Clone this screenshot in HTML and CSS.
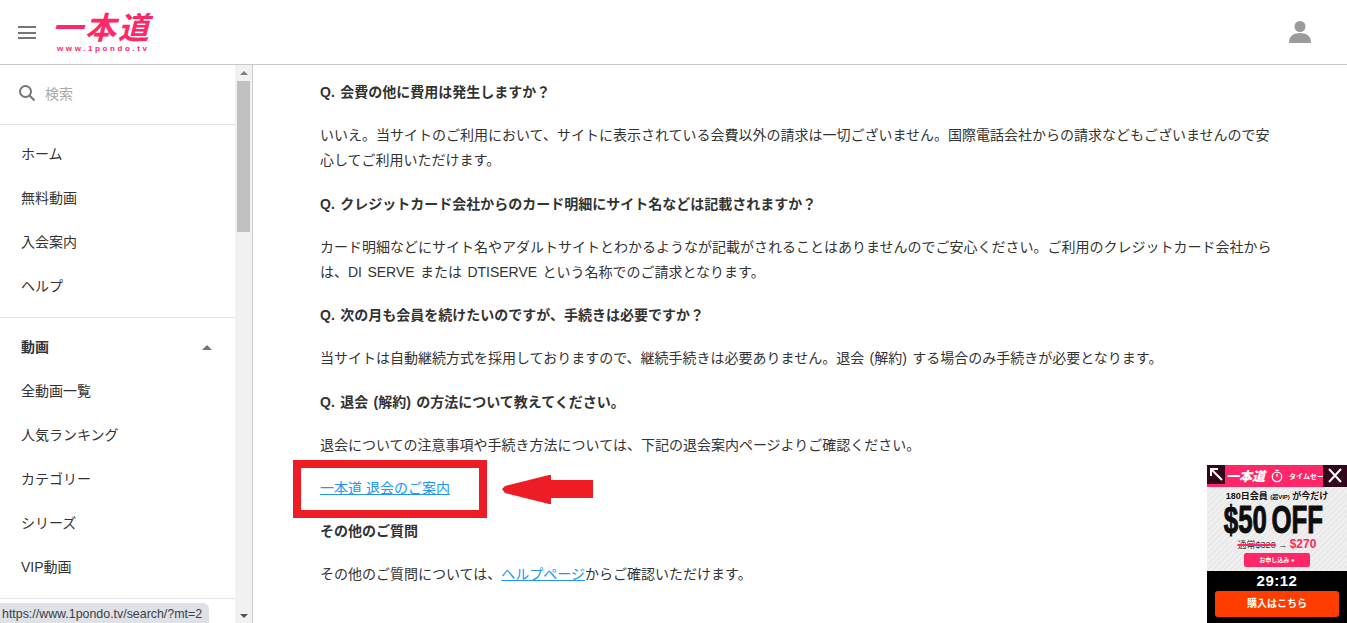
FILE: index.html
```html
<!DOCTYPE html>
<html lang="ja">
<head>
<meta charset="utf-8">
<title>一本道</title>
<link rel="stylesheet" href="styles.css">
</head>
<body>
<header class="topbar">
  <button class="burger" aria-label="menu"><span></span><span></span><span></span></button>
  <div class="logo">
    <div class="logo-mark">一本道</div>
    <div class="logo-url">www.1pondo.tv</div>
  </div>
  <svg class="user" viewBox="0 0 24 24" width="24" height="24"><circle cx="12" cy="6.500" r="5.500"/><path d="M1 23v-1C1 16 6 13 12 13S23 16 23 22V23z"/></svg>
</header>
<div class="body">
  <aside class="side">
    <nav class="side-nav">
      <div class="search">
        <svg viewBox="0 0 18 18" width="18" height="18"><circle cx="7.500" cy="7.500" r="5.500"/><path d="M11.500 11.500L16.500 16.500"/></svg>
        <span>検索</span>
      </div>
      <ul class="menu first">
        <li>ホーム</li><li>無料動画</li><li>入会案内</li><li>ヘルプ</li>
      </ul>
      <ul class="menu">
        <li class="group">動画<i class="caret"></i></li>
        <li>全動画一覧</li><li>人気ランキング</li><li>カテゴリー</li><li>シリーズ</li><li>VIP動画</li>
      </ul>
    </nav>
    <div class="scrollbar">
      <i class="arrow up"></i>
      <div class="thumb"></div>
      <i class="arrow down"></i>
    </div>
  </aside>
  <main class="content">
    <p class="q">Q. 会費の他に費用は発生しますか？</p>
    <p>いいえ。当サイトのご利用において、サイトに表示されている会費以外の請求は一切ございません。国際電話会社からの請求などもございませんので安心してご利用いただけます。</p>
    <p class="q">Q. クレジットカード会社からのカード明細にサイト名などは記載されますか？</p>
    <p>カード明細などにサイト名やアダルトサイトとわかるようなが記載がされることはありませんのでご安心ください。ご利用のクレジットカード会社からは、DI SERVE または DTISERVE という名称でのご請求となります。</p>
    <p class="q">Q. 次の月も会員を続けたいのですが、手続きは必要ですか？</p>
    <p>当サイトは自動継続方式を採用しておりますので、継続手続きは必要ありません。退会 (解約) する場合のみ手続きが必要となります。</p>
    <p class="q">Q. 退会 (解約) の方法について教えてください。</p>
    <p>退会についての注意事項や手続き方法については、下記の退会案内ページよりご確認ください。</p>
    <p class="callout-row">
      <a href="#">一本道 退会のご案内</a>
      <span class="red-box"></span>
      <svg class="red-arrow" viewBox="0 0 91 29" width="91" height="29"><path d="M0 14L3 11L47 0H49V5H91V23H49V29H47L3 18Z"/></svg>
    </p>
    <p class="q">その他のご質問</p>
    <p>その他のご質問については、<a href="#">ヘルプページ</a>からご確認いただけます。</p>
  </main>
</div>
<div class="status">https://www.1pondo.tv/search/?mt=2</div>
<aside class="promo">
  <div class="promo-head">
    <b class="promo-brand">一本道</b>
    <svg viewBox="0 0 14 16" width="12" height="14"><circle cx="7" cy="9" r="5.500"/><path d="M5 1.500H9M7 9V5.500"/></svg>
    <span>タイムセール</span>
  </div>
  <div class="promo-btn expand"><svg viewBox="0 0 18 18" width="18" height="18"><path d="M15 15L4 4M4 11V4H11"/></svg></div>
  <div class="promo-btn close"><svg viewBox="0 0 24 22" width="24" height="22"><path d="M6 4L18 17M18 4L6 17"/></svg></div>
  <div class="promo-card">
    <div class="promo-line">180日会員 <small>(超VIP)</small> が今だけ</div>
    <div class="promo-off">$50 OFF</div>
    <div class="promo-price"><s>通常$320</s> <span>→</span> <b>$270</b></div>
    <div class="promo-apply">お申し込み ●</div>
  </div>
  <div class="promo-foot">
    <div class="timer">29:12</div>
    <div class="buy">購入はこちら</div>
  </div>
</aside>
</body>
</html>
```
FILE: styles.css
```css
* { box-sizing: border-box; }
html, body { margin: 0; height: 623px; overflow: hidden; }
body {
  font-family: "Liberation Sans", "Noto Sans CJK JP", sans-serif;
  font-size: 14px;
  color: #333;
  background: #fff;
}
.topbar {
  height: 65px;
  border-bottom: 1px solid #c8c8c8;
  display: flex;
  align-items: center;
  padding: 0 35px 0 18px;
}
.burger {
  width: 18px; height: 13px; padding: 0; border: 0; background: none;
  display: flex; flex-direction: column; justify-content: space-between;
  margin-right: 19px; margin-top: 1px;
}
.burger span { display: block; height: 2px; background: #757575; }
.logo { display: flex; flex-direction: column; align-items: flex-start; width: 102px; margin-top: -2px; }
.logo-mark {
  font-family: "Noto Sans CJK JP", sans-serif;
  font-weight: 700; font-size: 31px; line-height: 31px;
  color: #ff2767; font-style: italic; letter-spacing: 2px;
  margin-left: -3px; white-space: nowrap;
}
.logo-url {
  font-size: 8px; font-weight: bold; line-height: 9px; color: #ff2767;
  letter-spacing: 2.600px; margin: 3px 0 0 2px; white-space: nowrap;
}
.user { margin-left: auto; fill: #9b9b9b; }
.body { display: flex; height: 558px; }
.side { width: 253px; flex: none; display: flex; border-right: 1px solid #ccc; overflow: hidden; }
.side-nav { width: 235px; flex: none; }
.search {
  height: 60px; border-bottom: 1px solid #e2e2e2;
  display: flex; align-items: center; gap: 9px; padding: 0 0 3px 18px;
  color: #a9a9a9; font-size: 14px;
}
.search svg { fill: none; stroke: #757575; stroke-width: 2; }
.menu { list-style: none; margin: 0; padding: 7px 0 9px; border-bottom: 1px solid #e2e2e2; }
.menu li { height: 44px; line-height: 44px; padding: 0 21px; color: #333; position: relative; white-space: nowrap; }
.menu .group { font-weight: bold; display: flex; align-items: center; justify-content: space-between; padding-right: 23px; }
.caret { width: 0; height: 0; border: 5px solid transparent; border-top: 0; border-bottom: 5px solid #757575; }
.scrollbar { width: 17px; background: #f1f1f1; display: flex; flex-direction: column; align-items: center; }
.arrow { width: 0; height: 0; border: 4px solid transparent; flex: none; }
.arrow.up { border-top: 0; border-bottom: 4px solid #7f7f7f; margin-top: 6px; }
.arrow.down { border-bottom: 0; border-top: 4px solid #505050; margin-top: auto; margin-bottom: 5px; }
.thumb { width: 13px; height: 151px; background: #c1c1c1; margin-top: 6px; }
.content { flex: 1; padding: 15px 66px 0 67px; line-height: 25.200px; word-spacing: 1.500px; }
.content p { margin: 0 0 18px; }
.content .q { font-weight: bold; }
.content a { color: #2196f3; text-decoration: underline; word-spacing: 0; }
.callout-row { position: relative; }
.red-box {
  position: absolute; left: -27px; top: -16px; width: 194px; height: 58px;
  border: 8px solid #ee1c25;
}
.red-arrow { position: absolute; left: 182px; top: -1px; fill: #ee1c25; }
.status {
  position: fixed; left: 0; bottom: 0; height: 20px; width: 209px;
  background: #dee1e6; border-top-right-radius: 6px;
  font-size: 12.400px; line-height: 23px; padding-left: 2px; color: #3c4043; white-space: nowrap;
}
.promo { position: fixed; left: 1207px; top: 465px; width: 140px; height: 158px; display: flex; flex-direction: column; }
.promo-head {
  height: 22px; background: #ff2767; color: #fff; display: flex; align-items: center;
  gap: 3px; padding-left: 19px; font-size: 7px; font-weight: bold; white-space: nowrap; overflow: hidden; flex: none;
}
.promo-brand { font-size: 13px; font-style: italic; font-weight: 900; font-family: "Noto Sans CJK JP", sans-serif; line-height: 22px; }
.promo-head svg { fill: none; stroke: #fff; stroke-width: 1.500; margin: 0 3px 0 3px; flex: none; }
.promo-btn { position: absolute; top: 0; background: #33071b; }
.promo-btn svg { fill: none; stroke: #fff; stroke-width: 2; display: block; }
.expand { left: 0; width: 18px; height: 19px; }
.close { right: 0; width: 24px; height: 22px; }
.promo-card {
  height: 84px; flex: none; text-align: center; color: #111;
  background: repeating-linear-gradient(135deg, #f0f0f0 0 2px, #e9e9e9 2px 4px);
  padding-top: 3px;
}
.promo-line { font-size: 9px; font-weight: bold; line-height: 12px; white-space: nowrap; }
.promo-line small { font-size: 6px; }
.promo-off {
  font-family: "Liberation Sans", sans-serif; font-size: 38px; font-weight: bold; line-height: 35px;
  color: #0d0d0d; transform: scaleX(0.68); white-space: nowrap; -webkit-text-stroke: 1px #0d0d0d;
  word-spacing: -4px; margin-left: -7px;
}
.promo-price { font-size: 9px; line-height: 13px; white-space: nowrap; color: #333; }
.promo-price s { text-decoration-color: #ff2767; text-decoration-thickness: 2px; }
.promo-price b { color: #ff2767; font-size: 12px; }
.promo-apply {
  width: 66px; height: 14px; margin: 1px auto 0; background: #ff2767; color: #fff;
  border-radius: 2px; font-size: 6px; font-weight: bold; line-height: 14px;
}
.promo-foot { flex: 1; background: #000; display: flex; flex-direction: column; align-items: center; }
.timer { color: #fff; font-size: 15px; font-weight: bold; line-height: 19px; letter-spacing: 0.500px; }
.buy {
  width: 124px; height: 26px; margin-top: 1px; background: #ff3d00; color: #fff; border-radius: 3px;
  font-size: 10px; font-weight: bold; line-height: 26px; text-align: center;
}
```
